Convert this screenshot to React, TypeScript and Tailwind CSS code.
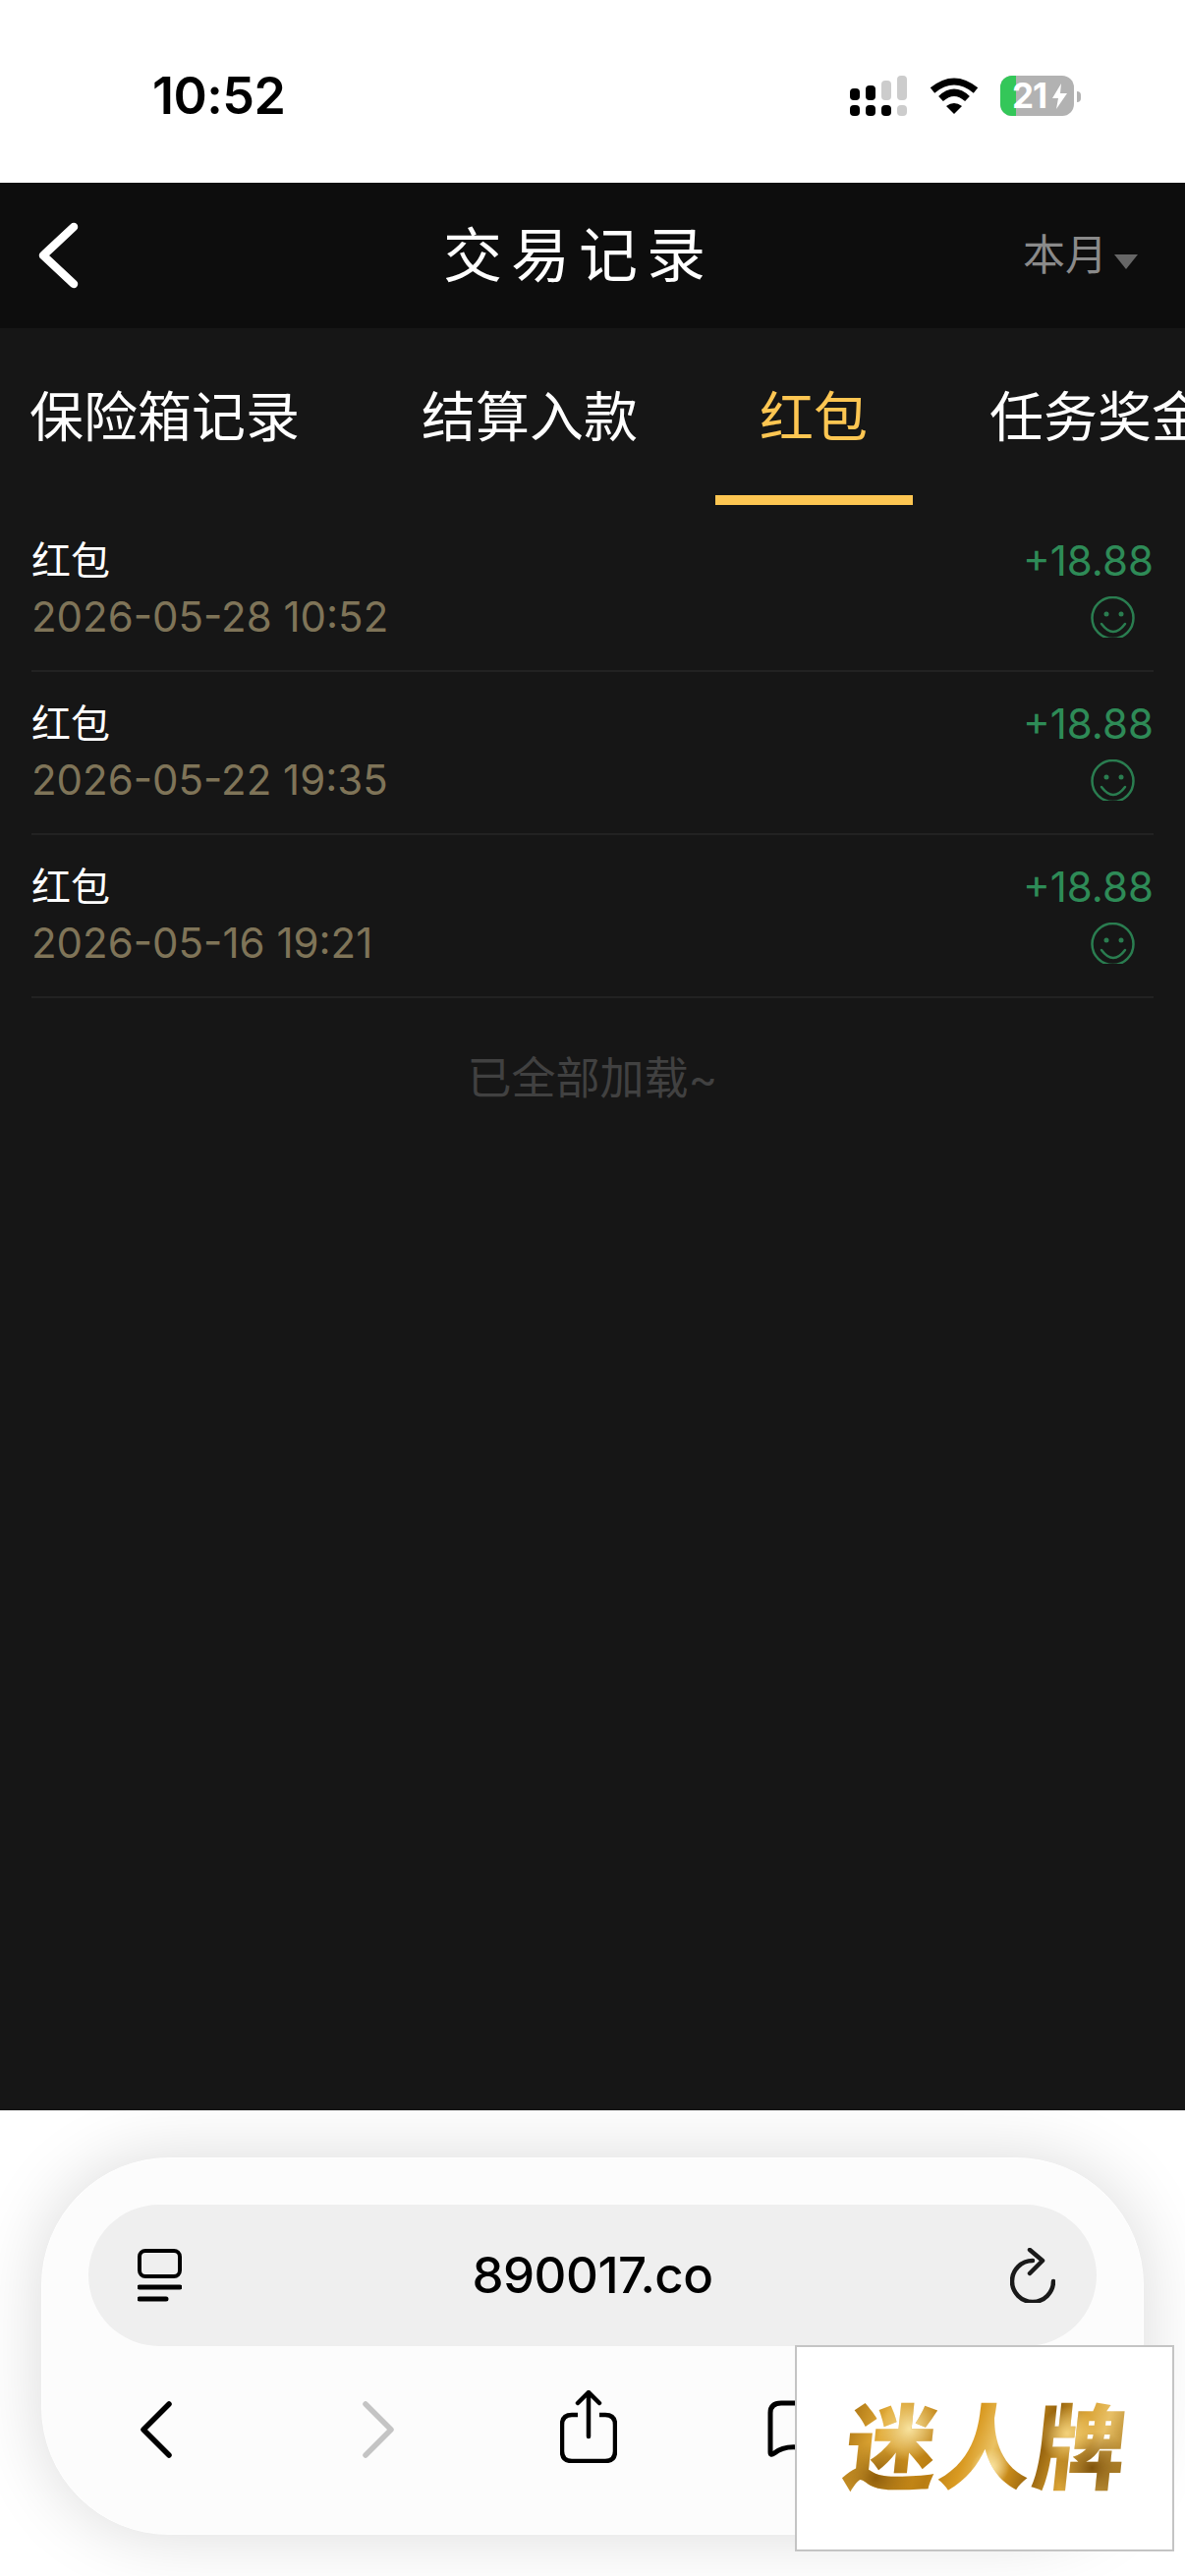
const rows = [
  { title: '红包', time: '2026-05-28 10:52', amount: '+18.88' },
  { title: '红包', time: '2026-05-22 19:35', amount: '+18.88' },
  { title: '红包', time: '2026-05-16 19:21', amount: '+18.88' },
];

const fontStack = "font-['Inter','Noto_Sans_CJK_SC',sans-serif]";

function StatusBar() {
  return (
    <div className="h-[186px] shrink-0 bg-white flex items-start">
      <span className="ml-[155px] mt-[70px] text-[52px] leading-[56px] font-semibold text-black tracking-[-0.5px]">10:52</span>
      {/* signal */}
      <svg className="ml-auto mt-[77px]" width="58" height="41" viewBox="0 0 58 41">
        <rect x="0" y="13" width="10" height="12" rx="4" fill="#000" />
        <rect x="16" y="10" width="10" height="15" rx="4" fill="#000" />
        <rect x="32" y="5" width="10" height="20" rx="4" fill="#ccc" />
        <rect x="48" y="0" width="10" height="25" rx="4" fill="#ccc" />
        <rect x="0" y="30" width="10" height="11" rx="4" fill="#000" />
        <rect x="16" y="30" width="10" height="11" rx="4" fill="#000" />
        <rect x="32" y="30" width="10" height="11" rx="4" fill="#000" />
        <rect x="48" y="30" width="10" height="11" rx="4" fill="#ccc" />
      </svg>
      {/* wifi */}
      <svg className="ml-[23px] mt-[79px]" width="50" height="37" viewBox="0 0 50 37">
        <path d="M3 13 Q25 -5 47 13" fill="none" stroke="#000" strokeWidth="7" />
        <path d="M11.5 21.5 Q25 9 38.5 21.5" fill="none" stroke="#000" strokeWidth="7" />
        <path d="M25 37 L17 29 Q25 23 33 29 Z" fill="#000" />
      </svg>
      {/* battery */}
      <div className="ml-[22px] mt-[77px] relative w-[75px] h-[41px] rounded-[12px] overflow-hidden bg-[#b2b2b2] flex">
        <div className="w-[16px] h-full bg-[#34c759]" />
        <span className="absolute left-[12px] top-0 text-[35px] leading-[41px] font-bold text-white tracking-[-1px]">21</span>
        <svg className="absolute left-[53px] top-[8px]" width="15" height="26" viewBox="0 0 15 26">
          <path d="M9 0 L0 15 H6 L4 26 L15 10 H8 Z" fill="#fff" />
        </svg>
      </div>
      <div className="ml-[3px] mt-[93px] w-[4px] h-[11px] rounded-r-full bg-[#b2b2b2] mr-[106px]" />
    </div>
  );
}

function Header() {
  return (
    <div className="h-[148px] shrink-0 bg-[#0d0d0d] flex items-center pl-[38px] pr-[48px]">
      <svg width="44" height="68" viewBox="0 0 44 68">
        <path d="M37 5 L6 34 L37 63" fill="none" stroke="#fff" strokeWidth="8.5" strokeLinecap="round" strokeLinejoin="round" />
      </svg>
      <span className="ml-[369px] text-[60px] leading-[68px] text-white tracking-[9px] whitespace-nowrap">交易记录</span>
      <span className="ml-auto mb-[2px] text-[43px] leading-[50px] text-[#8a8a8a] whitespace-nowrap">本月</span>
      <span className="ml-[7px] mt-[12px] w-0 h-0 border-l-[12px] border-r-[12px] border-t-[15px] border-l-transparent border-r-transparent border-t-[#666666]" />
    </div>
  );
}

function Tabs() {
  return (
    <div className="h-[184px] flex items-start gap-[124px] pl-[30px] pt-[58px] overflow-hidden text-[55px] leading-[64px] text-white whitespace-nowrap">
      <span>保险箱记录</span>
      <span>结算入款</span>
      <span className="relative text-[#fdc652]">
        红包
        <span className="absolute left-[-45px] right-[-46px] top-[112px] h-[10px] bg-[#fdc652]" />
      </span>
      <span>任务奖金</span>
    </div>
  );
}

function Smile() {
  return (
    <svg className="mt-[8px] mr-[19px]" width="45" height="42" viewBox="0 0 45 42">
      <circle cx="22.5" cy="22" r="21" fill="none" stroke="#2a7d50" strokeWidth="2.5" />
      <circle cx="16" cy="18" r="2.5" fill="#2a7d50" />
      <circle cx="31" cy="18" r="2.5" fill="#2a7d50" />
      <path d="M11 28 Q23 44 35 28" fill="none" stroke="#2a7d50" strokeWidth="2.5" strokeLinecap="round" />
    </svg>
  );
}

function Row({ title, time, amount }: { title: string; time: string; amount: string }) {
  return (
    <div className="h-[166px] border-b-2 border-[#222222] flex justify-between pt-[24px]">
      <div className="flex flex-col">
        <span className="text-[40px] leading-[57px] text-white">{title}</span>
        <span className="text-[42px] leading-[57px] text-[#7f7458] whitespace-nowrap">{time}</span>
      </div>
      <div className="flex flex-col items-end">
        <span className="text-[42px] leading-[57px] text-[#2e8b57]">{amount}</span>
        <Smile />
      </div>
    </div>
  );
}

function Toolbar() {
  return (
    <div className="h-[474px] shrink-0 bg-white px-[42px] pt-[48px] overflow-hidden">
      <div className="h-[384px] rounded-[130px] bg-[#fcfcfc] border border-white shadow-[0_0_70px_rgba(0,0,0,0.15)] px-[47px] pt-[47px]">
        <div className="h-[144px] rounded-full bg-[#efefef] flex items-center pl-[50px] pr-[42px]">
          <svg width="45" height="54" viewBox="0 0 45 54">
            <rect x="2" y="2" width="41" height="26" rx="6" fill="none" stroke="#000" strokeWidth="4" />
            <path d="M2 39 H43 M2 51 H29" fill="none" stroke="#000" strokeWidth="5" strokeLinecap="round" />
          </svg>
          <span className="flex-1 pr-[7px] text-center text-[51px] leading-[60px] font-medium text-black tracking-[-0.5px] whitespace-nowrap">890017.co</span>
          <svg width="46" height="56" viewBox="0 0 46 56">
            <path d="M23 13 A21 21 0 1 0 44 34" fill="none" stroke="#1a1a1a" strokeWidth="4.5" strokeLinecap="round" />
            <path d="M20 2 L33 13 L20 26" fill="none" stroke="#1a1a1a" strokeWidth="4.5" strokeLinecap="round" strokeLinejoin="round" />
          </svg>
        </div>
        <div className="flex items-start mt-[45px] pl-[53px]">
          <svg className="mt-[11px]" width="32" height="58" viewBox="0 0 32 58">
            <path d="M29 3 L3 29 L29 55" fill="none" stroke="#000" strokeWidth="5.5" strokeLinecap="round" strokeLinejoin="round" />
          </svg>
          <svg className="ml-[194px] mt-[11px]" width="32" height="58" viewBox="0 0 32 58">
            <path d="M3 3 L29 29 L3 55" fill="none" stroke="#c4c4c4" strokeWidth="5.5" strokeLinecap="round" strokeLinejoin="round" />
          </svg>
          <svg className="ml-[169px]" width="58" height="74" viewBox="0 0 58 74">
            <path d="M18 25 H12 Q2 25 2 35 V62 Q2 72 12 72 H46 Q56 72 56 62 V35 Q56 25 46 25 H40" fill="none" stroke="#000" strokeWidth="4.5" />
            <path d="M29 47 V3 M18 13 L29 2 L40 13" fill="none" stroke="#000" strokeWidth="4.5" strokeLinecap="round" strokeLinejoin="round" />
          </svg>
          <svg className="ml-[153px] mt-[9px]" width="40" height="60" viewBox="0 0 40 60">
            <path d="M38 4 H14 Q3 4 3 14 V54 Q3 58 7 55 Q18 46 38 50" fill="none" stroke="#000" strokeWidth="5" strokeLinecap="round" />
          </svg>
        </div>
      </div>
    </div>
  );
}

export default function App() {
  return (
    <div className={`relative w-[1206px] h-[2622px] overflow-hidden flex flex-col bg-white ${fontStack}`}>
      <StatusBar />
      <Header />
      <main className="flex-1 bg-[#161616] flex flex-col">
        <Tabs />
        <div className="px-[32px]">
          {rows.map((r) => (
            <Row key={r.time} {...r} />
          ))}
        </div>
        <div className="pt-[56px] text-center text-[45px] leading-[52px] text-[#414141]">已全部加载~</div>
      </main>
      <Toolbar />

      {/* logo watermark over the toolbar */}
      <div className="absolute left-[809px] top-[2387px] w-[386px] h-[210px] bg-white border-2 border-[#c4c4c4] flex items-center justify-center">
        <span className="-skew-x-6 ml-[4px] text-[94px] leading-[100px] font-black tracking-[2px] whitespace-nowrap text-transparent bg-clip-text bg-[radial-gradient(circle_at_22%_30%,#f8e3a0_0%,transparent_14%),radial-gradient(circle_at_52%_70%,#fbe7a8_0%,transparent_12%),radial-gradient(circle_at_78%_35%,#f3d27c_0%,transparent_12%),radial-gradient(circle_at_88%_70%,#7f520a_0%,transparent_14%),radial-gradient(circle_at_12%_80%,#8f5e0c_0%,transparent_14%),linear-gradient(105deg,#a8700f_0%,#e2ab38_14%,#c98c1b_26%,#b97d12_34%,#d99a22_44%,#eac162_52%,#c78a1a_60%,#97640e_68%,#d9a233_78%,#e8c066_86%,#9a6a10_100%)]">
          迷人牌
        </span>
      </div>
    </div>
  );
}
